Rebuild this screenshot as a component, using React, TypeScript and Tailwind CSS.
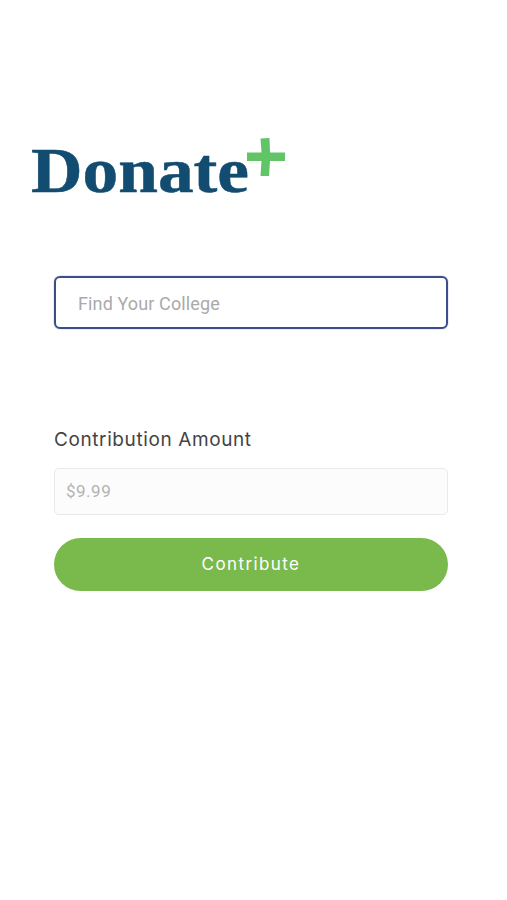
export default function App() {
  return (
    <main className="flex h-[900px] w-[507px] flex-col overflow-hidden bg-white">
      <header className="relative mt-[135px] h-[66px] pl-[31px]">
        <h1>
          <svg width="220" height="66" className="overflow-visible">
            <text x="0" y="56.5" textLength="218" lengthAdjust="spacingAndGlyphs" fill="#124c70" stroke="#124c70" strokeWidth="0.5" fontSize="64" fontWeight="700" fontFamily="Liberation Serif, serif">Donate</text>
          </svg>
        </h1>
        <svg className="absolute top-[3px] left-[247px]" width="39" height="38" viewBox="0 0 39 38" fill="#61c466">
          <path d="M13.5 0.5L22.5 0L23 14.5H38V23H23L22 38H13.5L14.5 23H0V14.5H14.5Z" />
        </svg>
      </header>
      <section className="mt-[74.5px] ml-[54px] w-[394px]">
        <div className="flex h-[53px] items-center rounded-md border-[2.5px] border-[#3c4d8d] px-[22px] pt-[3px] shadow-[0_0_1px_#3c4d8d]">
          <input className="w-full font-['Roboto',sans-serif] text-[18px] tracking-[0.12px] outline-none placeholder:text-[#aaaaaa]" placeholder="Find Your College" />
        </div>
        <label className="mt-[98px] block font-['Inter',sans-serif] text-[19px] leading-[26px] tracking-[0.6px] text-[#444444]">Contribution Amount</label>
        <input className="mt-[15px] block h-[47px] w-full rounded-[5px] border border-[#e9e9e9] bg-[#fcfcfc] px-[11px] font-['Roboto',sans-serif] text-[17px] tracking-[0.5px] placeholder:text-[#b3b3b3]" placeholder="$9.99" />
        <button className="mt-[23px] h-[53px] w-full rounded-full bg-[#7aba4c] pt-[2px] font-['Inter',sans-serif] text-[17px] tracking-[1.4px] text-white">Contribute</button>
      </section>
    </main>
  );
}
